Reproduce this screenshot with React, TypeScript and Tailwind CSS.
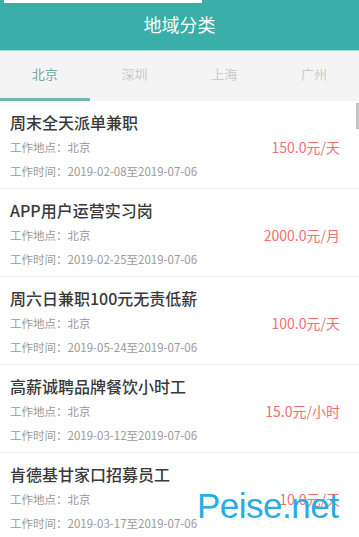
import React from 'react';

// Job list for one region, Beijing tab active.
const JOBS = [
  { title: '周末全天派单兼职', city: '北京', from: '2019-02-08', to: '2019-07-06', pay: '150.0元/天' },
  { title: 'APP用户运营实习岗', city: '北京', from: '2019-02-25', to: '2019-07-06', pay: '2000.0元/月' },
  { title: '周六日兼职100元无责低薪', city: '北京', from: '2019-05-24', to: '2019-07-06', pay: '100.0元/天' },
  { title: '高薪诚聘品牌餐饮小时工', city: '北京', from: '2019-03-12', to: '2019-07-06', pay: '15.0元/小时' },
  { title: '肯德基甘家口招募员工', city: '北京', from: '2019-03-17', to: '2019-07-06', pay: '10.0元/天' },
];

const TABS = ['北京', '深圳', '上海', '广州'];

const font = "font-['Noto_Sans_CJK_SC','Noto_Sans',sans-serif]";

function JobRow({ job }: { job: (typeof JOBS)[number] }) {
  return (
    <div className="flex border-b border-[#efefef] pl-[10px] pr-[19px] pt-[10px] pb-[7px]">
      <div className="flex-1">
        <div className="h-[22px] text-[16px] font-medium leading-[22px] text-[#3a3a3a]">{job.title}</div>
        <div className="mt-1 h-5 text-[11.5px] leading-5 text-[#9a9a9a]">工作地点：{job.city}</div>
        <div className="mt-1 h-5 text-[11.5px] leading-5 text-[#9a9a9a]">
          工作时间：{job.from}至{job.to}
        </div>
      </div>
      <div className="pt-[26px] text-[14px] leading-5 text-[#ee7070]">{job.pay}</div>
    </div>
  );
}

export default function App() {
  return (
    <div className={`relative h-[537px] w-[359px] overflow-hidden bg-white ${font}`}>
      <header className="h-[50px] bg-[#3aaea8]">
        <div className="ml-1 h-[3px] w-[198px] bg-white" />
        <h1 className="pt-[9px] text-center text-[18px] leading-6 text-white">地域分类</h1>
      </header>
      <div className="h-px bg-[#a9e0dc]" />

      <nav className="grid h-[50px] grid-cols-4 bg-[#f4f4f4]">
        {TABS.map((t, i) => (
          <div key={t} className="relative flex items-center justify-center pb-1">
            <span className={`text-[13px] ${i === 0 ? 'text-[#6da9a6]' : 'text-[#cacaca]'}`}>{t}</span>
            {i === 0 && <div className="absolute bottom-0 left-0 h-[3px] w-full bg-[#6fb6b2]" />}
          </div>
        ))}
      </nav>

      <div>
        {JOBS.map((job) => (
          <JobRow key={job.title} job={job} />
        ))}
      </div>

      {/* scrollbar thumb */}
      <div className="absolute right-0 top-[103px] h-[26px] w-[3px] bg-[#c4c4c4]" />

      {/* watermark */}
      <div className="absolute left-[197px] top-[485px] font-['Liberation_Sans',sans-serif] text-[35px] leading-[42px] tracking-[-0.5px] text-[#28ace2]">
        Peise.net
      </div>
    </div>
  );
}
